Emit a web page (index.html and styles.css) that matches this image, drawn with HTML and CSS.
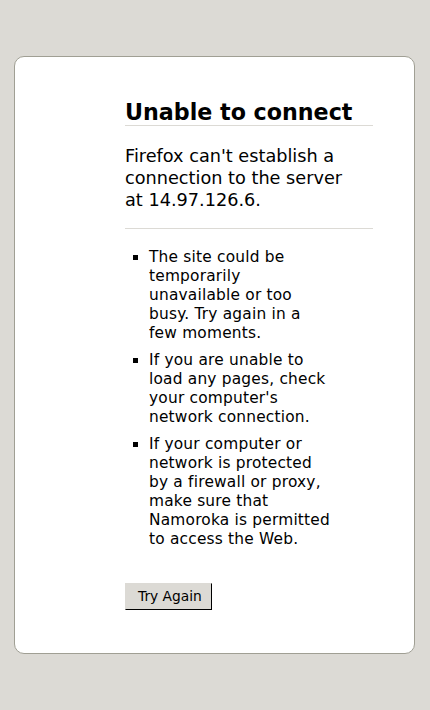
FILE: index.html
```html
<!DOCTYPE html>
<html lang="en">
<head>
    <meta charset="UTF-8">
    <title>Problem loading page</title>
    <link rel="stylesheet" href="styles.css">
</head>
<body>
<div id="error-page-container">
    <div id="error-title">
        <h1 id="error-title-text">Unable to connect</h1>
    </div>
    <div id="error-short-desc">
        <p>Firefox can't establish a connection to the server at 14.97.126.6.</p>
    </div>
    <div id="error-long-desc">
        <ul>
            <li>The site could be temporarily unavailable or too busy. Try again in a few moments.</li>
            <li>If you are unable to load any pages, check your computer's network connection.</li>
            <li>If your computer or network is protected by a firewall or proxy, make sure that Namoroka is permitted to access the Web.</li>
        </ul>
    </div>
    <button id="error-try-again">Try Again</button>
</div>
</body>
</html>
```

FILE: styles.css
```css
body {
    margin: 0;
    padding: 56px 15px 0 14px;
    background-color: #dcdad5;
    font-family: "DejaVu Sans", sans-serif;
    color: black;
}
#error-page-container {
    background-color: white;
    border: solid 1px #a09f94;
    border-radius: 10px;
    height: 596px;
    padding: 0 41px 0 110px;
}
#error-title {
    padding-top: 42px;
    border-bottom: solid 1px #dcdad5;
}
#error-title-text {
    margin: 0;
    font-size: 22.2px;
    line-height: 26px;
}
#error-short-desc {
    border-bottom: solid 1px #dcdad5;
}
#error-short-desc p {
    margin: 0;
    padding: 19px 12px 17px 0;
    font-size: 17.7px;
    line-height: 22px;
}
#error-long-desc ul {
    margin: 0;
    padding: 19px 41px 0 24px;
    list-style: square;
    font-size: 15.4px;
    line-height: 19px;
    letter-spacing: 0.2px;
}
#error-long-desc li {
    margin-bottom: 8px;
}
#error-try-again {
    margin-top: 26px;
    font-family: "DejaVu Sans", sans-serif;
    font-size: 13.8px;
    line-height: 17px;
    padding: 4px 9px 4px 12px;
    color: black;
    background-color: #dcdad5;
    border: solid 1px;
    border-color: #dcdad5 #000 #000 #dcdad5;
    border-radius: 0;
}
```
